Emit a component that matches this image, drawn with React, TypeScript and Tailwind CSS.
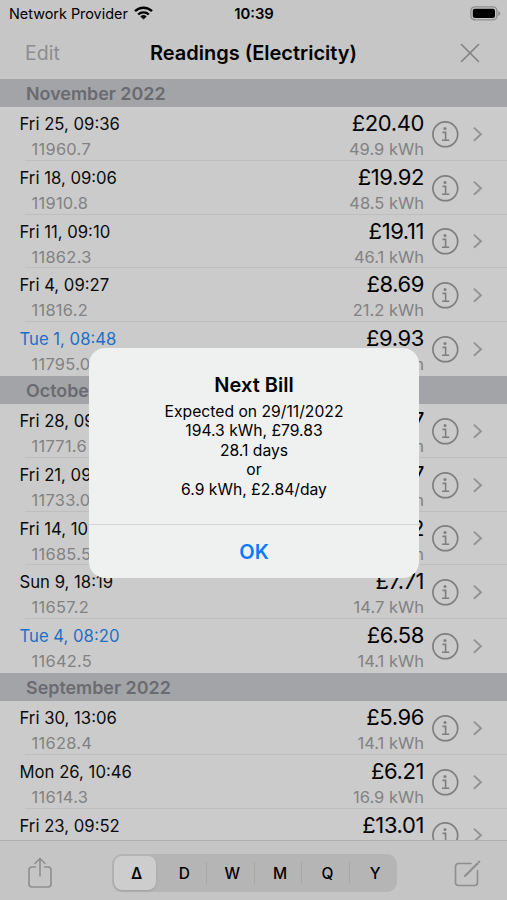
interface Reading {
  date: string
  value: string
  cost: string
  usage: string
  bill?: boolean
}

interface Month {
  name: string
  readings: Reading[]
}

const months: Month[] = [
  {
    name: 'November 2022',
    readings: [
      { date: 'Fri 25, 09:36', value: '11960.7', cost: '£20.40', usage: '49.9 kWh' },
      { date: 'Fri 18, 09:06', value: '11910.8', cost: '£19.92', usage: '48.5 kWh' },
      { date: 'Fri 11, 09:10', value: '11862.3', cost: '£19.11', usage: '46.1 kWh' },
      { date: 'Fri 4, 09:27', value: '11816.2', cost: '£8.69', usage: '21.2 kWh' },
      { date: 'Tue 1, 08:48', value: '11795.0', cost: '£9.93', usage: '23.4 kWh', bill: true },
    ],
  },
  {
    name: 'October 2022',
    readings: [
      { date: 'Fri 28, 09:12', value: '11771.6', cost: '£15.97', usage: '38.6 kWh' },
      { date: 'Fri 21, 09:25', value: '11733.0', cost: '£19.67', usage: '47.5 kWh' },
      { date: 'Fri 14, 10:02', value: '11685.5', cost: '£12.02', usage: '28.3 kWh' },
      { date: 'Sun 9, 18:19', value: '11657.2', cost: '£7.71', usage: '14.7 kWh' },
      { date: 'Tue 4, 08:20', value: '11642.5', cost: '£6.58', usage: '14.1 kWh', bill: true },
    ],
  },
  {
    name: 'September 2022',
    readings: [
      { date: 'Fri 30, 13:06', value: '11628.4', cost: '£5.96', usage: '14.1 kWh' },
      { date: 'Mon 26, 10:46', value: '11614.3', cost: '£6.21', usage: '16.9 kWh' },
    ],
  },
]

// Only the top half of this row shows above the toolbar
const partial = { date: 'Fri 23, 09:52', cost: '£13.01' }

const periods = ['Δ', 'D', 'W', 'M', 'Q', 'Y']

function StatusBar() {
  return (
    <div className="grid grid-cols-3 items-center h-[27px] pl-[9px] pr-[6px] text-black">
      <div className="flex items-center gap-[6px] whitespace-nowrap text-[14.4px]">
        Network Provider
        <svg width="19" height="14" viewBox="0 0 19 14" fill="none" stroke="black" strokeWidth="2.4">
          <path d="M1 5.2a12.2 12.2 0 0 1 17 0" />
          <path d="M4.2 8.5a7.6 7.6 0 0 1 10.6 0" />
          <path d="M9.5 13.6L6.4 10.5a4.5 4.5 0 0 1 6.2 0z" fill="black" stroke="none" />
        </svg>
      </div>
      <div className="pt-px pr-[2px] text-center text-[14.8px] font-semibold">10:39</div>
      <svg className="justify-self-end" width="31" height="15" viewBox="0 0 31 15">
        <rect x="0.9" y="0.9" width="26" height="13" rx="4" fill="none" stroke="#8d8d8d" strokeWidth="1.3" />
        <rect x="2.8" y="2.8" width="22.2" height="9.2" rx="2" fill="black" />
        <path d="M28.3 5v5c1.2-.5 1.9-1.4 1.9-2.5S29.5 5.5 28.3 5z" fill="#8d8d8d" />
      </svg>
    </div>
  )
}

function NavBar() {
  return (
    <div className="flex items-center justify-between h-[52px] pl-[25px] pr-[27px]">
      <span className="w-12 pt-px text-[19.5px] text-[#8d8d8e]">Edit</span>
      <h1 className="pl-[2px] text-[20px] font-semibold text-black whitespace-nowrap">Readings (Electricity)</h1>
      <div className="flex justify-end w-12">
        <svg width="20" height="20" viewBox="0 0 20 20" stroke="#828283" strokeWidth="1.6" strokeLinecap="round">
          <path d="M1.5 1.5l17 17M18.5 1.5l-17 17" />
        </svg>
      </div>
    </div>
  )
}

function InfoIcon() {
  return (
    <svg width="28" height="28" viewBox="0 0 28 28" fill="none" stroke="#7f7f80" strokeWidth="1.7">
      <circle cx="14.3" cy="14.3" r="12.4" />
      <circle cx="14" cy="8.5" r="1.5" fill="#7f7f80" stroke="none" />
      <path d="M11.5 12.4h3.1v7.5M11 20.2h7.2" strokeWidth="1.6" />
    </svg>
  )
}

function Chevron() {
  return (
    <svg width="11" height="16" viewBox="0 0 11 16" fill="none" stroke="#939394" strokeWidth="1.9">
      <path d="M1.9 1.6L9 8.2l-7.1 6.6" />
    </svg>
  )
}

function ReadingRow({ reading, last }: { reading: Reading; last: boolean }) {
  return (
    <div className="relative flex h-[53.8px] pl-[19.5px] pr-[24px]">
      <div className="flex-1">
        <div className={`h-[33px] leading-[34px] text-[16.7px] whitespace-nowrap ${reading.bill ? 'text-[#1f6fc6]' : 'text-[#0c0c0c]'}`}>
          {reading.date}
        </div>
        <div className="pl-3 -mt-[1px] leading-[20px] text-[16.4px] tracking-[0.3px] text-[#828283]">{reading.value}</div>
      </div>
      <div className="text-right">
        <div className="h-[33px] leading-[33px] text-[22px] tracking-[-0.4px] text-black">{reading.cost}</div>
        <div className="-mt-[1px] leading-[20px] text-[16.5px] text-[#828283]">{reading.usage}</div>
      </div>
      <div className="flex items-center gap-[13px] pl-[7px]">
        <InfoIcon />
        <Chevron />
      </div>
      {!last && <div className="absolute bottom-0 left-[25px] right-0 h-px bg-[#bebebf]" />}
    </div>
  )
}

function PartialRow() {
  return (
    <div className="flex flex-1 min-h-0 overflow-hidden pl-[19.5px] pr-[24px]">
      <div className="flex-1 h-[31px] leading-[34px] text-[16.7px] whitespace-nowrap text-[#0c0c0c]">{partial.date}</div>
      <div className="h-[31px] leading-[33px] text-[22px] tracking-[-0.4px] text-black">{partial.cost}</div>
      <div className="flex items-center gap-[13px] h-[53.8px] pl-[7px]">
        <InfoIcon />
        <Chevron />
      </div>
    </div>
  )
}

function MonthSection({ month, open }: { month: Month; open: boolean }) {
  return (
    <section>
      <h2 className="h-7 pl-[26px] leading-[29px] text-[17.9px] font-semibold text-[#6a6b70] bg-[#a3a4a8]">{month.name}</h2>
      {month.readings.map((reading, index) => (
        <ReadingRow key={reading.value} reading={reading} last={!open && index === month.readings.length - 1} />
      ))}
    </section>
  )
}

function Toolbar() {
  return (
    <div className="flex items-center justify-between h-[60px] shrink-0 pl-[27px] pr-[26px] pt-[5px] bg-[#c5c5c6] border-t border-[#b0b0b1]">
      <svg width="26" height="32" viewBox="0 0 26 32" fill="none" stroke="#8e8e8f" strokeWidth="1.6" strokeLinecap="round" strokeLinejoin="round">
        <path d="M8.5 10H5a3 3 0 0 0-3 3v14a3 3 0 0 0 3 3h16a3 3 0 0 0 3-3V13a3 3 0 0 0-3-3h-3.5" />
        <path d="M13 19V2M8 6.5l5-5 5 5" />
      </svg>
      <div className="flex items-center w-[285px] h-[38px] ml-px rounded-[10px] bg-[#b5b5b6]">
        {periods.map((period, index) => (
          <div
            key={period}
            className={
              index === 0
                ? 'flex items-center justify-center w-[42px] h-[34px] ml-[2px] mr-[3px] pt-[2px] pl-[4px] rounded-[8px] bg-[#cdcdce] text-[15.5px] font-semibold shadow'
                : `flex items-center justify-center w-[47.6px] h-[22px] pt-[2px] pl-[4px] text-[15.5px] font-medium ${index > 1 ? 'border-l border-[#a8a8a9]' : ''}`
            }
          >
            {period}
          </div>
        ))}
      </div>
      <svg width="27" height="27" viewBox="0 0 27 27" fill="none" stroke="#8e8e8f" strokeWidth="1.6" strokeLinecap="round">
        <path d="M17 3.5H4.5a3 3 0 0 0-3 3v16a3 3 0 0 0 3 3h16a3 3 0 0 0 3-3V10.5" />
        <path d="M11 16L23.5 3.5" strokeWidth="2.1" />
        <path d="M25 2l.3-.3" strokeWidth="2.1" />
      </svg>
    </div>
  )
}

function BillAlert() {
  return (
    <div className="absolute left-[89px] top-[348px] w-[330px] h-[230px] flex flex-col rounded-[16px] bg-[#eff1f1] text-center text-black">
      <div className="h-[175.5px] pt-[23px]">
        <h3 className="h-[28px] leading-[28px] text-[20px] font-semibold">Next Bill</h3>
        <div className="pt-[2.5px] text-[15.7px] leading-[19.6px]">
          <p>Expected on 29/11/2022</p>
          <p>194.3 kWh, £79.83</p>
          <p>28.1 days</p>
          <p>or</p>
          <p>6.9 kWh, £2.84/day</p>
        </div>
      </div>
      <button className="flex-1 pt-px border-t border-[#d2d6d7] text-[20px] font-semibold text-[#0a7aff]">OK</button>
    </div>
  )
}

export default function App() {
  return (
    <div className="relative flex flex-col w-[507px] h-[900px] overflow-hidden bg-[#cbcbcb] font-['Inter',sans-serif]">
      <header className="h-[79px] shrink-0 bg-[#c6c6c6]">
        <StatusBar />
        <NavBar />
      </header>
      <main className="flex flex-col flex-1 min-h-0">
        {months.map((month, index) => (
          <MonthSection key={month.name} month={month} open={index === months.length - 1} />
        ))}
        <PartialRow />
      </main>
      <Toolbar />
      <BillAlert />
    </div>
  )
}
